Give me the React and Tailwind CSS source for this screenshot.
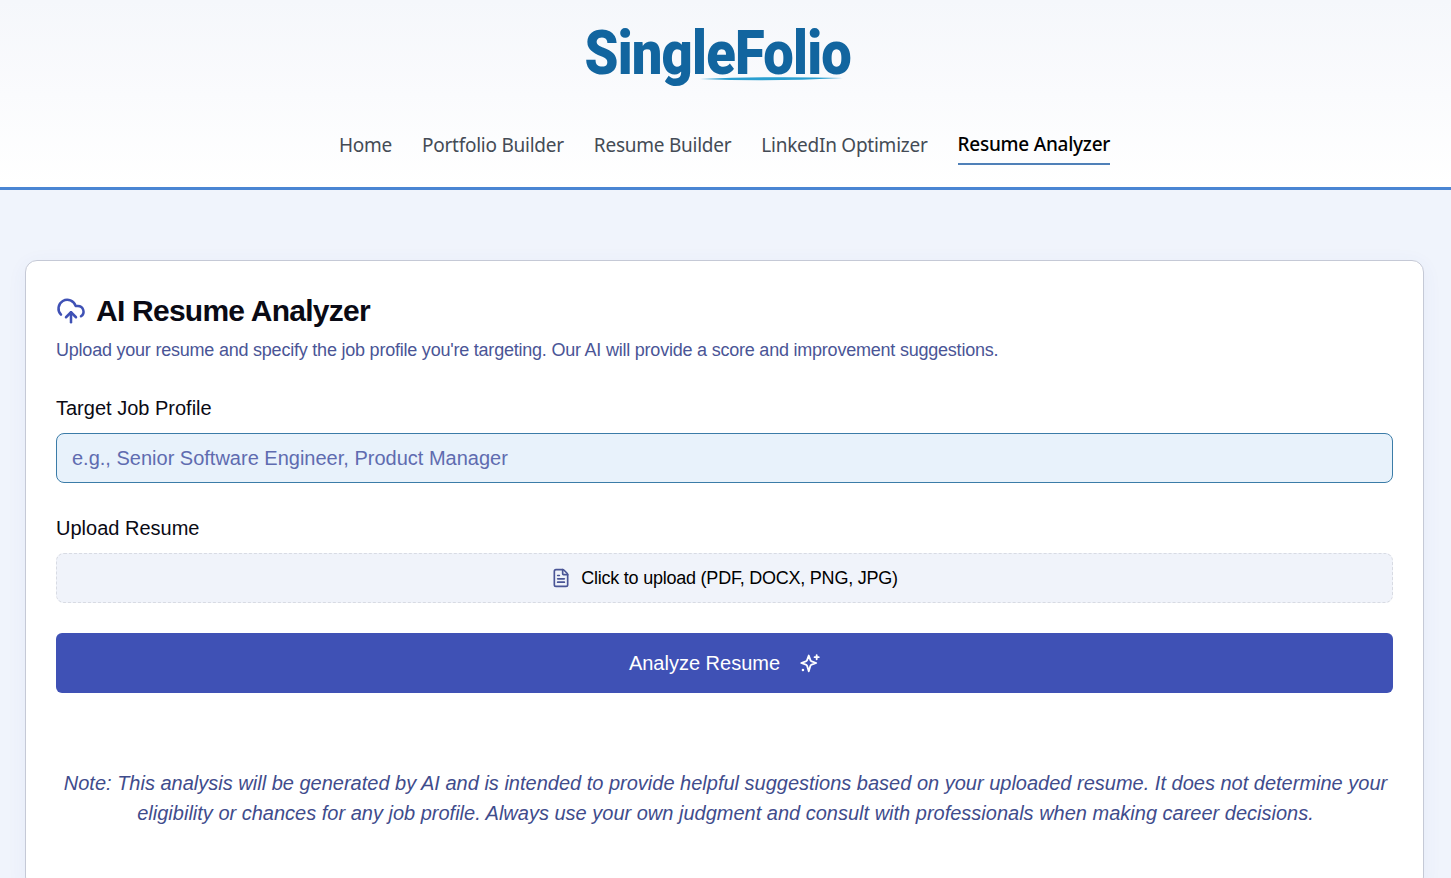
import { CloudUpload, FileText } from 'lucide-react'

const navItems = ['Home', 'Portfolio Builder', 'Resume Builder', 'LinkedIn Optimizer']

const Logo = () => (
  <div className="relative h-[70px] w-[270px] mr-[15px] -mt-[2px] flex justify-center">
    <span className="font-['Roboto','Liberation_Sans',sans-serif] font-black text-[61px] leading-[70px] tracking-[-0.9px] text-[#12659f] whitespace-nowrap scale-x-[0.89]">
      SingleFolio
    </span>
    <svg className="absolute left-[117px] top-[58px]" width="143" height="6" viewBox="0 0 143 6">
      <path d="M0 3 Q70 0 143 2 Q70 6 0 3Z" fill="#2a9fd0" />
    </svg>
  </div>
)

const SparkleIcon = ({ className }) => (
  <svg className={className} viewBox="0 0 24 24" fill="none" stroke="currentColor" strokeWidth="2.2" strokeLinecap="round" strokeLinejoin="round">
    <path d="M10.5 3 12.5 8.6a2.5 2.5 0 0 0 1.5 1.5L19.5 12l-5.5 1.9a2.5 2.5 0 0 0-1.5 1.5L10.5 22l-2-6.6a2.5 2.5 0 0 0-1.5-1.5L1.5 12 7 10.1a2.5 2.5 0 0 0 1.5-1.5Z" />
    <path d="M20 2.5v5M17.5 5h5" />
    <path d="M3.5 20.5h.01" strokeWidth="3" />
  </svg>
)

export default function App() {
  return (
    <div className="min-h-screen bg-[#f0f4fc] font-['Liberation_Sans',Arial,sans-serif] overflow-hidden h-[878px]">
      {/* Header */}
      <header className="h-[190px] bg-gradient-to-b from-[#f5f7fb] to-white border-b-[3px] border-[#4a85d3] flex flex-col items-center pt-[20px]">
        <Logo />
        <nav className="flex gap-[30px] mt-[44px] mr-[2px] font-['Noto_Sans',sans-serif] text-[19px] leading-[26px] tracking-[-0.25px]">
          {navItems.map(item => (
            <a key={item} className="text-[#444b55] pb-[6px]">{item}</a>
          ))}
          <a className="text-black font-medium pb-[6px] border-b-2 border-[#4f80b8] h-[34px] -translate-y-[1px]">Resume Analyzer</a>
        </nav>
      </header>

      {/* Main */}
      <main className="pl-[25px] pr-[27px] pt-[70px]">
        <div className="bg-white border border-[#c5c9d6] rounded-[12px] px-[30px] pt-[30px] pb-[60px] shadow-[0_4px_20px_rgba(63,81,181,0.06)]">
          <div className="flex items-center gap-[10px] h-[40px]">
            <CloudUpload className="w-[30px] h-[30px] text-[#3f51b5]" strokeWidth={2} />
            <h1 className="text-[30px] leading-[40px] font-bold tracking-[-0.75px] text-[#0a0a14]">AI Resume Analyzer</h1>
          </div>
          <p className="mt-[7px] text-[18px] leading-[24px] tracking-[-0.22px] text-[#4a5596]">
            Upload your resume and specify the job profile you're targeting. Our AI will provide a score and improvement suggestions.
          </p>

          <label className="block mt-[32px] text-[20px] leading-[28px] text-[#0a0a14]">Target Job Profile</label>
          <input
            placeholder="e.g., Senior Software Engineer, Product Manager"
            className="mt-[11px] block w-full h-[50px] px-[15px] rounded-[8px] border border-[#3b7ca8] bg-[#e8f2fb] text-[20px] placeholder:text-[#5f6cb0] outline-none"
          />

          <label className="block mt-[31px] text-[20px] leading-[28px] text-[#0a0a14]">Upload Resume</label>
          <div className="mt-[11px] h-[50px] rounded-[8px] border border-dashed border-[#d8dbe3] bg-[#f0f3fa] flex items-center justify-center gap-[10px]">
            <FileText className="w-[20px] h-[20px] text-[#4a5596]" strokeWidth={2} />
            <span className="text-[18px] tracking-[-0.23px] text-black">Click to upload (PDF, DOCX, PNG, JPG)</span>
          </div>

          <button className="mt-[30px] w-full h-[60px] rounded-[6px] bg-[#3f51b5] text-white text-[20px] flex items-center justify-center gap-[20px]">
            Analyze Resume
            <SparkleIcon className="w-[20px] h-[20px]" />
          </button>

          <p className="mt-[75px] pl-[2px] text-center italic text-[20px] leading-[30px] text-[#3f4c8c]">
            Note: This analysis will be generated by AI and is intended to provide helpful suggestions based on your uploaded resume. It does not determine your eligibility or chances for any job profile. Always use your own judgment and consult with professionals when making career decisions.
          </p>
        </div>
      </main>
    </div>
  )
}
